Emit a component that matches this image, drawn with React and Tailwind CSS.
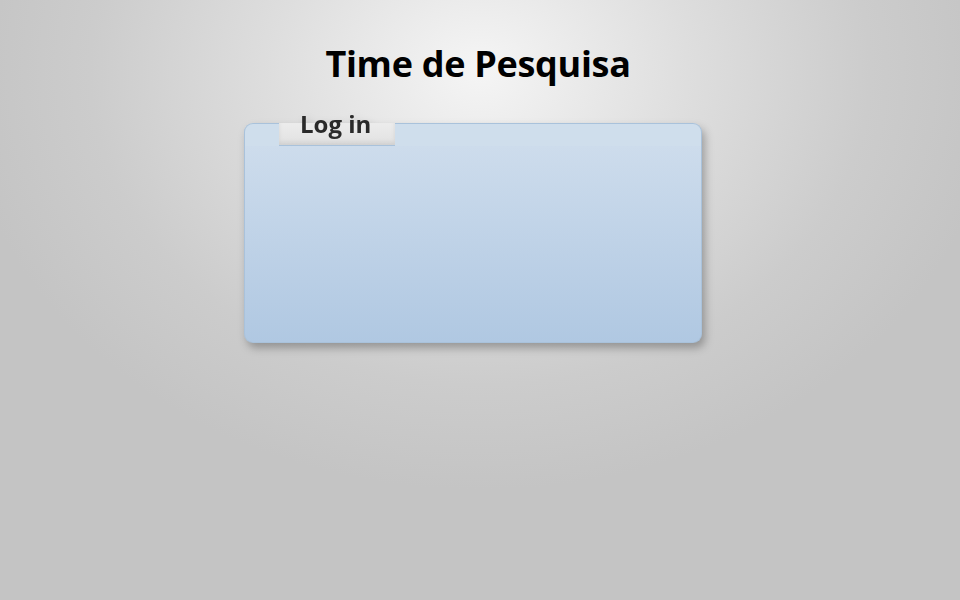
export default function App() {
  return (
    <div className="w-[960px] h-[600px] overflow-hidden bg-[radial-gradient(ellipse_520px_420px_at_480px_70px,#f5f5f5_0%,#dedede_40%,#cccccc_75%,#c4c4c4_100%)] font-['Open_Sans',sans-serif]">
      <div className="flex flex-col items-center pt-[38px]">
        <h1 className="text-[36px] leading-[52px] font-bold text-black tracking-[-0.3px] ml-[-4px]">Time de Pesquisa</h1>

        {/* Login panel */}
        <div className="mt-[33px] ml-[-14px] w-[458px] flex flex-col drop-shadow-[3px_5px_4px_rgba(0,0,0,0.28)]">
          <div className="flex h-[23px]">
            <div className="w-[35px] bg-[#cfdeec] rounded-tl-[9px] border-t border-l border-[#a9c2db]" />
            <div className="w-[116px] relative bg-gradient-to-b from-[#ececec] to-[#e2e2e2] border-b border-[#a9c2db] shadow-[inset_0_-3px_4px_rgba(0,0,0,0.08)]">
              <span className="absolute left-[21px] top-[-16px] text-[24px] leading-[34px] font-bold text-[#2a2a2a]">Log in</span>
            </div>
            <div className="flex-1 bg-[#cfdeec] rounded-tr-[9px] border-t border-r border-[#a9c2db]" />
          </div>
          <div className="h-[197px] bg-gradient-to-b from-[#cddcec] to-[#b0c8e2] rounded-b-[9px] border-x border-b border-[#a9c2db]" />
        </div>
      </div>
    </div>
  );
}
